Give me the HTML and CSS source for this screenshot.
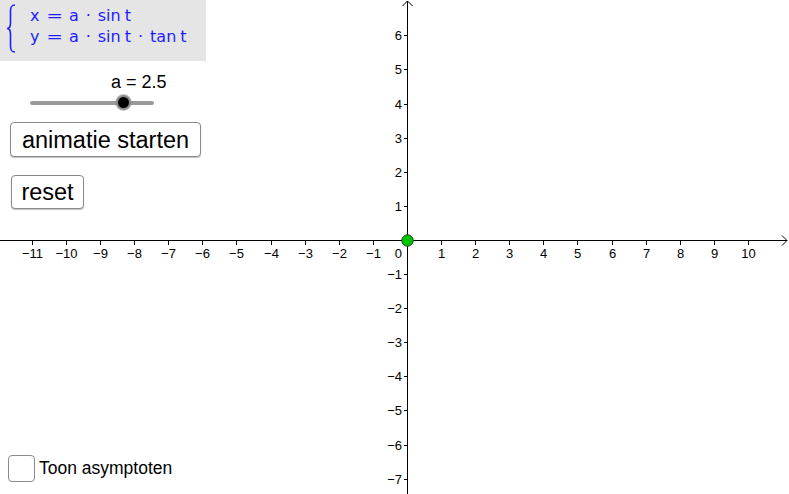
FILE: index.html
```html
<!DOCTYPE html>
<html>
<head>
<meta charset="utf-8">
<link rel="stylesheet" href="styles.css">
</head>
<body>
<div class="applet">
  <svg class="graph" width="789" height="494" viewBox="0 0 789 494">
    <g class="axis">
      <line x1="0" y1="240.5" x2="787" y2="240.5"/>
      <polyline points="782,235.5 787,240.5 782,245.5"/>
      <line x1="407.5" y1="1" x2="407.5" y2="494"/>
      <polyline points="402.5,6 407.5,1 412.5,6"/>
    </g>
    <g class="ticks">
      <line x1="32.5" y1="240" x2="32.5" y2="245"/>
      <line x1="66.5" y1="240" x2="66.5" y2="245"/>
      <line x1="100.5" y1="240" x2="100.5" y2="245"/>
      <line x1="134.5" y1="240" x2="134.5" y2="245"/>
      <line x1="168.5" y1="240" x2="168.5" y2="245"/>
      <line x1="202.5" y1="240" x2="202.5" y2="245"/>
      <line x1="236.5" y1="240" x2="236.5" y2="245"/>
      <line x1="271.5" y1="240" x2="271.5" y2="245"/>
      <line x1="305.5" y1="240" x2="305.5" y2="245"/>
      <line x1="339.5" y1="240" x2="339.5" y2="245"/>
      <line x1="373.5" y1="240" x2="373.5" y2="245"/>
      <line x1="441.5" y1="240" x2="441.5" y2="245"/>
      <line x1="475.5" y1="240" x2="475.5" y2="245"/>
      <line x1="509.5" y1="240" x2="509.5" y2="245"/>
      <line x1="543.5" y1="240" x2="543.5" y2="245"/>
      <line x1="577.5" y1="240" x2="577.5" y2="245"/>
      <line x1="612.5" y1="240" x2="612.5" y2="245"/>
      <line x1="646.5" y1="240" x2="646.5" y2="245"/>
      <line x1="680.5" y1="240" x2="680.5" y2="245"/>
      <line x1="714.5" y1="240" x2="714.5" y2="245"/>
      <line x1="748.5" y1="240" x2="748.5" y2="245"/>

      <line x1="404" y1="35.5" x2="408" y2="35.5"/>
      <line x1="404" y1="69.5" x2="408" y2="69.5"/>
      <line x1="404" y1="104.5" x2="408" y2="104.5"/>
      <line x1="404" y1="138.5" x2="408" y2="138.5"/>
      <line x1="404" y1="172.5" x2="408" y2="172.5"/>
      <line x1="404" y1="206.5" x2="408" y2="206.5"/>
      <line x1="404" y1="274.5" x2="408" y2="274.5"/>
      <line x1="404" y1="308.5" x2="408" y2="308.5"/>
      <line x1="404" y1="342.5" x2="408" y2="342.5"/>
      <line x1="404" y1="376.5" x2="408" y2="376.5"/>
      <line x1="404" y1="410.5" x2="408" y2="410.5"/>
      <line x1="404" y1="445.5" x2="408" y2="445.5"/>
      <line x1="404" y1="479.5" x2="408" y2="479.5"/>
    </g>
    <g class="xlabels">
      <text x="32.5" y="258">−11</text>
      <text x="66.5" y="258">−10</text>
      <text x="100.5" y="258">−9</text>
      <text x="134.5" y="258">−8</text>
      <text x="168.5" y="258">−7</text>
      <text x="202.5" y="258">−6</text>
      <text x="236.5" y="258">−5</text>
      <text x="271.5" y="258">−4</text>
      <text x="305.5" y="258">−3</text>
      <text x="339.5" y="258">−2</text>
      <text x="373.5" y="258">−1</text>
      <text x="441.5" y="258">1</text>
      <text x="475.5" y="258">2</text>
      <text x="509.5" y="258">3</text>
      <text x="543.5" y="258">4</text>
      <text x="577.5" y="258">5</text>
      <text x="612.5" y="258">6</text>
      <text x="646.5" y="258">7</text>
      <text x="680.5" y="258">8</text>
      <text x="714.5" y="258">9</text>
      <text x="748.5" y="258">10</text>
    </g>
    <g class="ylabels">
      <text x="402" y="258">0</text>
      <text x="402" y="40">6</text>
      <text x="402" y="74">5</text>
      <text x="402" y="109">4</text>
      <text x="402" y="143">3</text>
      <text x="402" y="177">2</text>
      <text x="402" y="211">1</text>
      <text x="402" y="279">−1</text>
      <text x="402" y="313">−2</text>
      <text x="402" y="347">−3</text>
      <text x="402" y="381">−4</text>
      <text x="402" y="415">−5</text>
      <text x="402" y="450">−6</text>
      <text x="402" y="484">−7</text>
    </g>
    <circle class="origin" cx="407.5" cy="240.5" r="5.7"/>
  </svg>

  <div class="panel">
    <div class="formula">
      <svg class="brace" width="20" height="61" viewBox="0 0 20 61">
        <path d="M15,5 C11.5,5 10.5,6.5 10.5,11 L10.5,23 C10.5,27 9.5,28.5 7,28.5 C9.5,28.5 10.5,30 10.5,34 L10.5,46 C10.5,50.5 11.5,52 15,52"/>
      </svg>
      <div class="lines">
        <div class="line"><span>x</span><span class="eq">=</span><span>a</span><span class="dot">·</span><span>sin</span><span class="sp">t</span></div>
        <div class="line"><span>y</span><span class="eq">=</span><span>a</span><span class="dot">·</span><span>sin</span><span class="sp">t</span><span class="dot">·</span><span>tan</span><span class="sp">t</span></div>
      </div>
    </div>

    <div class="slider">
      <div class="slider-label">a = 2.5</div>
      <div class="track">
        <div class="knob"></div>
      </div>
    </div>

    <button class="btn btn-start">animatie starten</button>
    <button class="btn btn-reset">reset</button>
  </div>

  <label class="check">
    <span class="box"></span>
    <span class="check-text">Toon asymptoten</span>
  </label>
</div>
</body>
</html>
```
FILE: styles.css
```css
html, body {
  margin: 0;
  padding: 0;
  background: #ffffff;
}

.applet {
  position: relative;
  width: 789px;
  height: 494px;
  overflow: hidden;
  background: #ffffff;
  font-family: "Liberation Sans", Arial, sans-serif;
}

.graph {
  position: absolute;
  left: 0;
  top: 0;
  display: block;
}

.axis line,
.axis polyline,
.ticks line {
  stroke: #000000;
  stroke-width: 1;
  fill: none;
}

.xlabels text,
.ylabels text {
  font-family: "Liberation Sans", Arial, sans-serif;
  font-size: 13px;
  fill: #000000;
}

.xlabels text {
  text-anchor: middle;
}

.ylabels text {
  text-anchor: end;
}

.origin {
  fill: #00c400;
  stroke: #1a3d1a;
  stroke-width: 1;
}

.panel {
  position: absolute;
  left: 0;
  top: 0;
  display: flex;
  flex-direction: column;
  align-items: flex-start;
}

.formula {
  width: 206px;
  height: 61px;
  background: #e5e5e5;
  display: flex;
  flex-direction: row;
  box-sizing: border-box;
}

.brace {
  display: block;
  flex: none;
}

.brace path {
  fill: none;
  stroke: #1e1eff;
  stroke-width: 1.6;
}

.lines {
  padding-top: 5px;
  padding-left: 10px;
  display: flex;
  flex-direction: column;
  color: #1e1eff;
  font-family: "DejaVu Sans", sans-serif;
  font-size: 16px;
}

.line {
  height: 21px;
  line-height: 21px;
  display: flex;
  flex-direction: row;
  white-space: nowrap;
}

.eq {
  margin: 0 7px 0 9px;
  transform: scaleX(1.25);
}

.dot {
  margin: 0 7px;
}

.sp {
  margin-left: 4px;
}

.slider {
  margin-top: 11px;
  width: 210px;
}

.slider-label {
  padding-left: 111px;
  font-size: 18px;
  line-height: 20px;
  height: 20px;
  color: #000000;
}

.track {
  position: relative;
  margin: 9px 0 0 30px;
  width: 124px;
  height: 4px;
  border-radius: 2px;
  background: #9a9a9a;
}

.knob {
  position: absolute;
  left: 86px;
  top: -6px;
  width: 11px;
  height: 11px;
  border-radius: 50%;
  background: #000000;
  border: 2.5px solid #8c8c8c;
  box-shadow: 0 0 0 1px rgba(140, 140, 140, 0.45);
}

.btn {
  font-family: "Liberation Sans", Arial, sans-serif;
  font-size: 23.5px;
  color: #000000;
  background: #ffffff;
  border: 1px solid #8a8a8a;
  border-radius: 4px;
  box-shadow: 0 1px 1px rgba(0, 0, 0, 0.25);
  padding: 2px 0 0 0;
  margin: 0;
  line-height: 1;
  box-sizing: border-box;
}

.btn-start {
  margin-top: 17px;
  margin-left: 10px;
  width: 191px;
  height: 35px;
}

.btn-reset {
  margin-top: 18px;
  margin-left: 11px;
  width: 73px;
  height: 34px;
}

.check {
  position: absolute;
  left: 8px;
  top: 455px;
  display: flex;
  flex-direction: row;
  align-items: center;
  gap: 4px;
}

.box {
  display: block;
  width: 27px;
  height: 27px;
  box-sizing: border-box;
  border: 1.5px solid #8c8c8c;
  border-radius: 4px;
  background: #ffffff;
}

.check-text {
  font-size: 17.5px;
  color: #000000;
  line-height: 27px;
}
```
